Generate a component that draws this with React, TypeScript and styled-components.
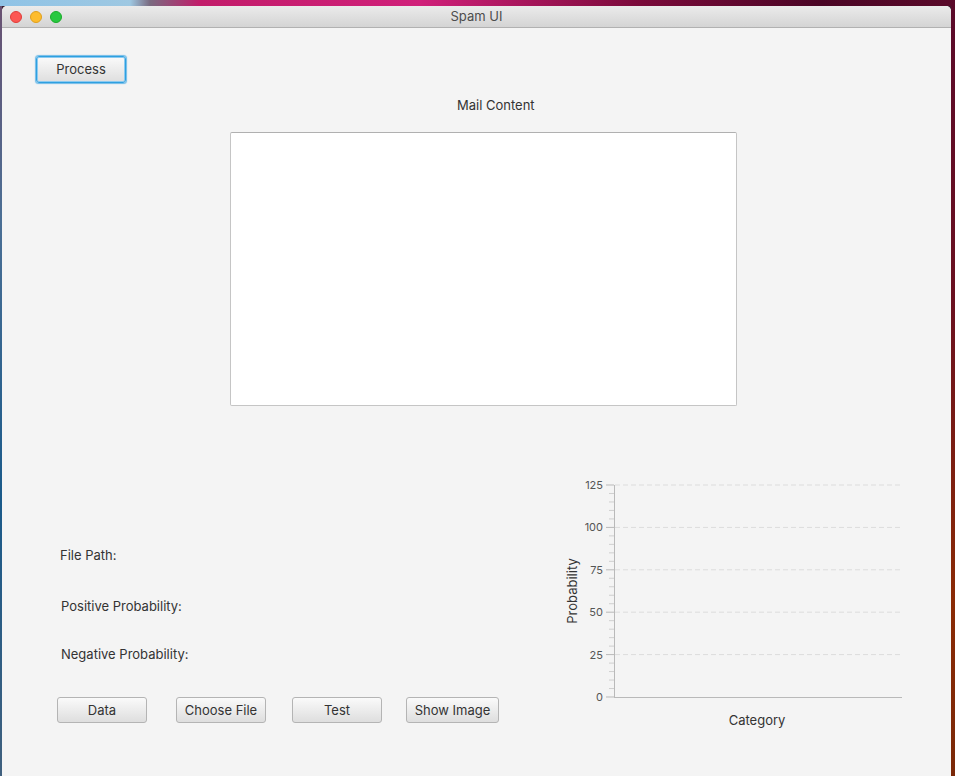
import React from "react";
import styled, { createGlobalStyle } from "styled-components";

const FONT = `Inter, "Liberation Sans", Arial, sans-serif`;

const GlobalStyle = createGlobalStyle`
    html, body {
        margin: 0;
        padding: 0;
        height: 776px;
        overflow: hidden;
    }

    body {
        font-family: ${FONT};
        background:
            linear-gradient(to right, #8fc3e6 0, #9ec8e2 130px, #7a6a80 150px, #c21c6a 200px, #d0207a 420px, #7a0a3a 640px, #4a0525 820px, #5a0a2a 955px) top / 100% 6px no-repeat,
            linear-gradient(to bottom, #6a5070 0, #4b6f95 220px, #1a5a8a 500px, #40607e 776px) left / 2px 100% no-repeat,
            linear-gradient(to bottom, #5a0a2a 0, #6a1020 300px, #8a2a05 600px, #7a2808 776px) right / 4px 100% no-repeat,
            #3a2030;
    }
`;

const TICKS = [0, 25, 50, 75, 100, 125];

const SpamWindow: React.FC = () => {
    return (
        <Window>
            <TitleBar>
                <Lights>
                    <Light color="#fc5753" edge="#df3d38" />
                    <Light color="#fdbc2e" edge="#de9f1e" />
                    <Light color="#28c840" edge="#1aab29" />
                </Lights>
                <Title>Spam UI</Title>
            </TitleBar>

            <Content>
                <TopBar>
                    <Button focused width={90}>Process</Button>
                </TopBar>

                <MailLabel>Mail Content</MailLabel>
                <MailArea />

                <Bottom>
                    <InfoColumn>
                        <InfoLabel indent={58} top={0}>File Path:</InfoLabel>
                        <InfoLabel indent={59} top={35}>Positive Probability:</InfoLabel>
                        <InfoLabel indent={59} top={32}>Negative Probability:</InfoLabel>
                        <ButtonRow>
                            <Button width={90}>Data</Button>
                            <Button width={90}>Choose File</Button>
                            <Button width={90}>Test</Button>
                            <Button width={93}>Show Image</Button>
                        </ButtonRow>
                    </InfoColumn>

                    <Chart width="350" height="260" viewBox="0 0 350 260">
                        {/* minor ticks */}
                        {Array.from({ length: 25 }).map((_, i) => {
                            const y = 221 - i * (212 / 25);
                            return i % 5 === 0 ? null : (
                                <line key={"m" + i} x1={53} x2={58} y1={y} y2={y} stroke="#cfcfcf" strokeWidth={1} />
                            );
                        })}
                        {TICKS.map((t) => {
                            const y = 221 - (t / 125) * 212;
                            return (
                                <g key={t}>
                                    {t > 0 && (
                                        <line x1={59} x2={346} y1={y} y2={y} stroke="#dcdcdc" strokeDasharray="5 3" />
                                    )}
                                    <line x1={50} x2={58} y1={y} y2={y} stroke="#b9b9b9" />
                                    <AxisText x={47} y={y + 4} textAnchor="end">{t}</AxisText>
                                </g>
                            );
                        })}
                        <line x1={58.5} x2={58.5} y1={9} y2={221.5} stroke="#b9b9b9" />
                        <line x1={58} x2={346} y1={221.5} y2={221.5} stroke="#b9b9b9" />
                        <AxisTitle transform="translate(21 115) rotate(-90)" textAnchor="middle">Probability</AxisTitle>
                        <AxisTitle x={201} y={249} textAnchor="middle">Category</AxisTitle>
                    </Chart>
                </Bottom>
            </Content>
        </Window>
    );
};

const App: React.FC = () => (
    <>
        <GlobalStyle />
        <SpamWindow />
    </>
);

const Window = styled.div`
    margin: 6px 4px 0 2px;
    height: 800px;
    display: flex;
    flex-direction: column;
    background-color: #f4f4f4;
    border-radius: 5px 5px 0 0;
    overflow: hidden;
`;

const TitleBar = styled.div`
    position: relative;
    height: 21px;
    flex-shrink: 0;
    display: flex;
    align-items: center;
    justify-content: center;
    background: linear-gradient(to bottom, #ebebeb, #d4d4d4);
    border-bottom: 1px solid #b1b1b1;
`;

const Lights = styled.div`
    position: absolute;
    left: 8px;
    top: 5px;
    display: flex;
    gap: 8px;
`;

const Light = styled.span<{ color: string; edge: string }>`
    width: 12px;
    height: 12px;
    border-radius: 50%;
    box-sizing: border-box;
    background-color: ${(p) => p.color};
    border: 0.5px solid ${(p) => p.edge};
`;

const Title = styled.div`
    font-size: 13px;
    line-height: 16px;
    margin-top: -1px;
    color: #4d4d4d;
`;

const Content = styled.div`
    display: flex;
    flex-direction: column;
    padding-top: 28px;
    font-size: 13px;
    color: #333;
`;

const TopBar = styled.div`
    display: flex;
    padding-left: 34px;
`;

const Button = styled.button<{ focused?: boolean; width: number }>`
    width: ${(p) => p.width}px;
    height: ${(p) => (p.focused ? 27 : 26)}px;
    padding: 0 0 1px;
    box-sizing: border-box;
    font-family: inherit;
    font-size: 13px;
    color: #333;
    background: linear-gradient(to bottom, #fafafa, #dedede);
    border: 1px solid ${(p) => (p.focused ? "#2ea0e0" : "#b4b4b4")};
    border-radius: 3px;
    box-shadow: ${(p) => (p.focused ? "0 0 0 1px #8ccaf0 inset, 0 0 1px 0.5px #6fbbe8" : "none")};
`;

const MailLabel = styled.div`
    margin-top: 14px;
    padding-left: 455px;
    line-height: 16px;
`;

const MailArea = styled.div`
    margin: 19px 0 0 228px;
    width: 507px;
    height: 274px;
    box-sizing: border-box;
    background-color: #fff;
    border: 1px solid #c5c5c5;
    border-top-color: #b0b0b0;
    border-radius: 2px;
`;

const Bottom = styled.div`
    display: flex;
    align-items: flex-start;
    margin-top: 70px;
`;

const InfoColumn = styled.div`
    display: flex;
    flex-direction: column;
    width: 554px;
    padding-top: 71px;
`;

const InfoLabel = styled.div<{ indent: number; top: number }>`
    margin: ${(p) => p.top}px 0 0 ${(p) => p.indent}px;
    line-height: 16px;
`;

const ButtonRow = styled.div`
    display: flex;
    gap: 29px;
    margin: 35px 0 0 55px;

    & > button:nth-child(3) {
        margin-left: -3px;
    }
    & > button:nth-child(4) {
        margin-left: -5px;
    }
`;

const Chart = styled.svg`
    display: block;
    flex-shrink: 0;
`;

const AxisText = styled.text`
    font-family: ${FONT};
    font-size: 11px;
    fill: #555;
`;

const AxisTitle = styled.text`
    font-family: ${FONT};
    font-size: 13px;
    fill: #333;
`;

export default App;
